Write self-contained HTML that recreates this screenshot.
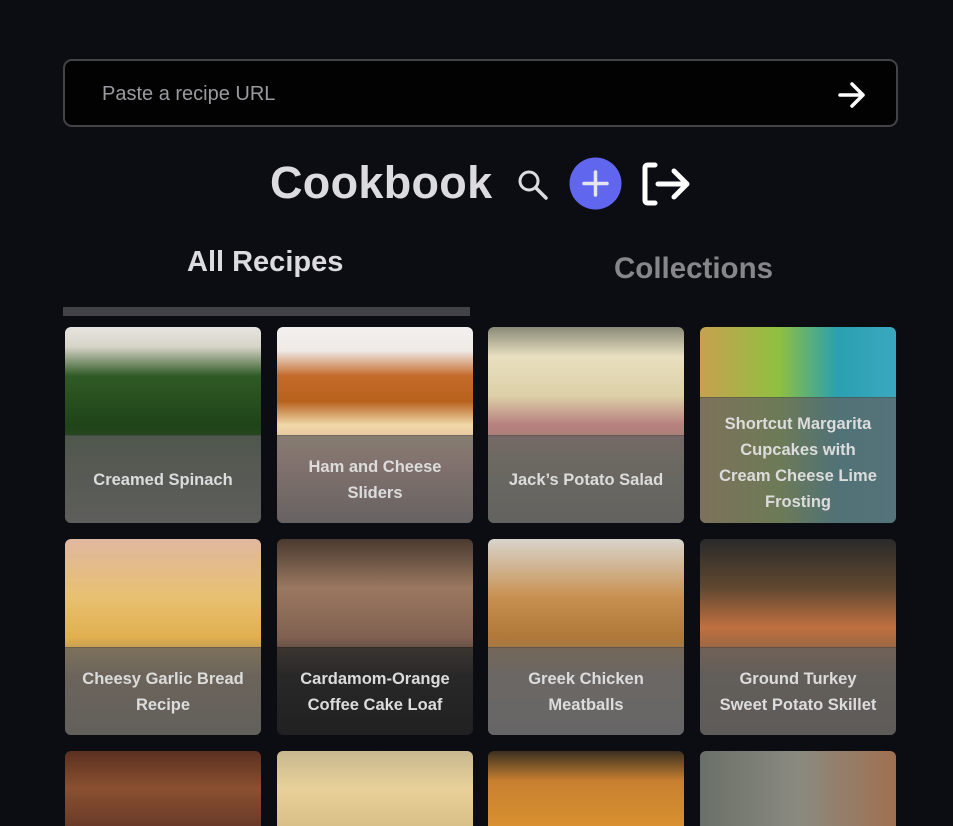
<!DOCTYPE html>
<html><head><meta charset="utf-8"><style>
*{margin:0;padding:0;box-sizing:border-box}
html,body{width:953px;height:826px;overflow:hidden}
body{background:#0c0d12;font-family:"Liberation Sans","DejaVu Sans",sans-serif;position:relative}
.inp{position:absolute;left:63px;top:59px;width:835px;height:68px;background:#020203;border:2px solid #444448;border-radius:9px}
.inp span{position:absolute;left:37px;top:22px;font-size:20px;color:#9a9a9e}
.title{position:absolute;left:270px;top:157px;font-size:45px;font-weight:bold;color:#dcdbe0;letter-spacing:0.3px}
.tab1{position:absolute;left:187px;top:246px;font-size:29px;font-weight:bold;color:#dcdbe0}
.tab2{position:absolute;left:614px;top:252px;font-size:29.5px;font-weight:bold;color:#87878b}
.bar{position:absolute;left:63px;top:307px;width:407px;height:9px;background:#424247}
.card{position:absolute;width:196px;height:196px;border-radius:6px;overflow:hidden}
.card .im{position:absolute;inset:0}
.card .cap{position:absolute;left:0;right:0;top:108px;bottom:0;display:flex;align-items:center;justify-content:center;text-align:center;color:#dcdcdc;font-weight:bold;font-size:16.5px;line-height:26px;padding:0 14px;background:rgba(95,95,95,.72);border-top:1px solid rgba(0,0,0,.15)}
</style></head><body>
<div class="inp"><span>Paste a recipe URL</span>
<svg style="position:absolute;left:772px;top:20px" width="30" height="28" viewBox="0 0 30 28"><path d="M3 14H26M15 3L26 14L15 25" stroke="#fff" stroke-width="3.5" fill="none" stroke-linecap="round" stroke-linejoin="round"/></svg></div>
<div class="title">Cookbook</div>
<svg style="position:absolute;left:515px;top:167px" width="34" height="34" viewBox="0 0 34 34"><circle cx="14" cy="14" r="9" stroke="#dcdbe0" stroke-width="3" fill="none"/><path d="M21 21L31 31" stroke="#dcdbe0" stroke-width="3.5" stroke-linecap="round"/></svg>
<svg style="position:absolute;left:569px;top:157px" width="53" height="53" viewBox="0 0 53 53"><circle cx="26.5" cy="26.5" r="26" fill="#6166ee"/><path d="M26.5 15V38M15 26.5H38" stroke="#e4e4f4" stroke-width="3.5" stroke-linecap="round"/></svg>
<svg style="position:absolute;left:641px;top:161px" width="52" height="46" viewBox="0 0 52 46"><path d="M14 4H7Q4 4 4 7V39Q4 42 7 42H14" stroke="#fff" stroke-width="5" fill="none" stroke-linecap="round"/><path d="M17 23H45M33 10L46 23L33 36" stroke="#fff" stroke-width="5" fill="none" stroke-linecap="round" stroke-linejoin="round"/></svg>
<div class="tab1">All Recipes</div>
<div class="tab2">Collections</div>
<div class="bar"></div>

<div class="card" style="left:65px;top:327px"><div class="im" style="background:linear-gradient(180deg,#e6e4e0 0%,#d8d4c8 10%,#2f5a25 25%,#1f4418 50%,#3a4a30 70%,#5a5a50 100%)"></div><div class="cap">Creamed Spinach</div></div>
<div class="card" style="left:277px;top:327px"><div class="im" style="background:linear-gradient(180deg,#f2f0ee 0%,#efeae6 12%,#c46a2a 25%,#b8621e 38%,#f0d8a8 50%,#d8a090 70%,#7a6a68 100%)"></div><div class="cap">Ham and Cheese Sliders</div></div>
<div class="card" style="left:488px;top:327px"><div class="im" style="background:linear-gradient(180deg,#8a8a78 0%,#e8e0c0 15%,#ddd0a8 35%,#b88080 50%,#8a8068 70%,#6a6a60 100%)"></div><div class="cap">Jack’s Potato Salad</div></div>
<div class="card" style="left:700px;top:327px"><div class="im" style="background:linear-gradient(90deg,#c8a050 0%,#90c040 40%,#2aa0b0 70%,#3aa8c0 100%)"></div><div class="cap" style="top:70px;padding:4px 16px 0">Shortcut Margarita Cupcakes with Cream Cheese Lime Frosting</div></div>

<div class="card" style="left:65px;top:539px"><div class="im" style="background:linear-gradient(180deg,#e0b8a0 0%,#e8c070 30%,#e0b050 50%,#8a7050 70%,#6a6050 100%)"></div><div class="cap">Cheesy Garlic Bread Recipe</div></div>
<div class="card" style="left:277px;top:539px"><div class="im" style="background:linear-gradient(180deg,#4a3a30 0%,#9a7860 25%,#806050 50%,#2a2a2a 70%,#111 100%)"></div><div class="cap" style="background:rgba(40,40,40,.7)">Cardamom-Orange Coffee Cake Loaf</div></div>
<div class="card" style="left:488px;top:539px"><div class="im" style="background:linear-gradient(180deg,#d8d4cc 0%,#c89050 30%,#b07838 50%,#8a7a70 70%,#7a7878 100%)"></div><div class="cap">Greek Chicken Meatballs</div></div>
<div class="card" style="left:700px;top:539px"><div class="im" style="background:linear-gradient(180deg,#2a2a2a 0%,#604830 25%,#c07040 45%,#6a5a48 70%,#5a5048 100%)"></div><div class="cap" style="padding:0 6px">Ground Turkey<br>Sweet Potato Skillet</div></div>

<div class="card" style="left:65px;top:751px;height:75px;border-radius:6px 6px 0 0"><div class="im" style="background:linear-gradient(180deg,#5a3020,#8a5030 50%,#6a3a28)"></div></div>
<div class="card" style="left:277px;top:751px;height:75px;border-radius:6px 6px 0 0"><div class="im" style="background:linear-gradient(180deg,#c8b890,#e8d098 50%,#d8c088)"></div></div>
<div class="card" style="left:488px;top:751px;height:75px;border-radius:6px 6px 0 0"><div class="im" style="background:linear-gradient(180deg,#3a3020,#c88030 40%,#d89030)"></div></div>
<div class="card" style="left:700px;top:751px;height:75px;border-radius:6px 6px 0 0"><div class="im" style="background:linear-gradient(90deg,#6a7068,#8a8a80 50%,#a07050)"></div></div>
</body></html>
